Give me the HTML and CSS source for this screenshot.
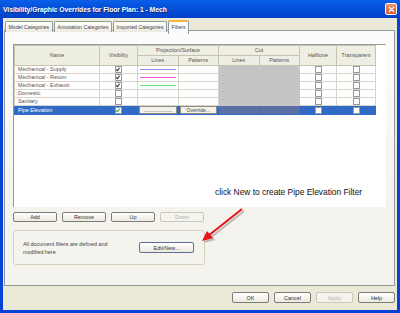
FILE: index.html
```html
<!DOCTYPE html>
<html lang="en">
<head>
<meta charset="UTF-8">
<title>Visibility/Graphic Overrides</title>
<link rel="stylesheet" href="styles.css">
</head>
<body>
<div class="window">
  <div class="titlebar">
    <span class="title">Visibility/Graphic Overrides for Floor Plan: 1 - Mech</span>
    <span class="close">
      <svg width="7" height="7" viewBox="0 0 8 8"><path d="M1 1L7 7M7 1L1 7" stroke="#fff" stroke-width="1.6"/></svg>
    </span>
  </div>
  <div class="tabs">
    <div class="tab">Model Categories</div>
    <div class="tab">Annotation Categories</div>
    <div class="tab">Imported Categories</div>
    <div class="tab active">Filters</div>
  </div>
  <div class="panel">
    <div class="listbox">
      <table class="grid">
        <thead>
          <tr>
            <th rowspan="2" class="c-name">Name</th>
            <th rowspan="2" class="c-vis">Visibility</th>
            <th colspan="2">Projection/Surface</th>
            <th colspan="2">Cut</th>
            <th rowspan="2" class="c-half">Halftone</th>
            <th rowspan="2" class="c-trans">Transparent</th>
          </tr>
          <tr class="sub">
            <th class="c-pl">Lines</th>
            <th class="c-pp">Patterns</th>
            <th class="c-cl">Lines</th>
            <th class="c-cp">Patterns</th>
          </tr>
        </thead>
        <tbody>
          <tr>
            <td class="name">Mechanical - Supply</td>
            <td><span class="chk on"></span></td>
            <td><span class="line supply"></span></td>
            <td></td>
            <td class="cut"></td><td class="cut"></td>
            <td><span class="chk"></span></td>
            <td><span class="chk"></span></td>
          </tr>
          <tr>
            <td class="name">Mechanical - Return</td>
            <td><span class="chk on"></span></td>
            <td><span class="line return"></span></td>
            <td></td>
            <td class="cut"></td><td class="cut"></td>
            <td><span class="chk"></span></td>
            <td><span class="chk"></span></td>
          </tr>
          <tr>
            <td class="name">Mechanical - Exhaust</td>
            <td><span class="chk on"></span></td>
            <td><span class="line exhaust"></span></td>
            <td></td>
            <td class="cut"></td><td class="cut"></td>
            <td><span class="chk"></span></td>
            <td><span class="chk"></span></td>
          </tr>
          <tr>
            <td class="name">Domestic</td>
            <td><span class="chk"></span></td>
            <td></td>
            <td></td>
            <td class="cut"></td><td class="cut"></td>
            <td><span class="chk"></span></td>
            <td><span class="chk"></span></td>
          </tr>
          <tr>
            <td class="name">Sanitary</td>
            <td><span class="chk"></span></td>
            <td></td>
            <td></td>
            <td class="cut"></td><td class="cut"></td>
            <td><span class="chk"></span></td>
            <td><span class="chk"></span></td>
          </tr>
          <tr class="selected">
            <td class="name">Pipe Elevation</td>
            <td><span class="chk on green"></span></td>
            <td><span class="cellbtn dots">..........................</span></td>
            <td><span class="cellbtn">Override...</span></td>
            <td class="cut"></td><td class="cut"></td>
            <td><span class="chk"></span></td>
            <td><span class="chk"></span></td>
          </tr>
        </tbody>
      </table>
      <div class="note">click New to create Pipe Elevation Filter</div>
    </div>
    <div class="btnrow">
      <button class="btn">Add</button>
      <button class="btn">Remove</button>
      <button class="btn">Up</button>
      <button class="btn" disabled>Down</button>
    </div>
    <div class="groupbox">
      <p class="groupText">All document filters are defined and modified here</p>
      <button class="btn edit">Edit/New...</button>
    </div>
  </div>
  <div class="footer">
    <button class="btn small">OK</button>
    <button class="btn small">Cancel</button>
    <button class="btn small" disabled>Apply</button>
    <button class="btn small">Help</button>
  </div>
  <svg class="arrow" width="60" height="50" viewBox="0 0 60 50">
    <g transform="translate(2,2)" opacity="0.35">
      <path d="M44 3L10 30" stroke="#555" stroke-width="2.2" fill="none"/>
      <path d="M4 35L9 25L15 32Z" fill="#555"/>
    </g>
    <path d="M44 3L10 30" stroke="#e8141a" stroke-width="2" fill="none"/>
    <path d="M4 35L9 25L15 32Z" fill="#e8141a"/>
  </svg>
</div>
</body>
</html>
```
FILE: styles.css
```css
body {
    margin: 0;
    font-family: "Liberation Sans", Arial, sans-serif;
    background: #ece9d8;
}
.window {
    position: relative;
    width: 400px;
    height: 313px;
    box-sizing: border-box;
    background: #ece9d8;
    border-left: 3px solid #0842d6;
    border-right: 3px solid #0842d6;
    border-bottom: 3px solid #0842d6;
    display: flex;
    flex-direction: column;
}
.titlebar {
    height: 18px;
    margin: 0 -3px;
    padding: 0 3px 0 3px;
    background: linear-gradient(#0a5fe8, #0450da 40%, #0340c8);
    display: flex;
    align-items: center;
    justify-content: space-between;
}
.title {
    color: #fff;
    font-weight: bold;
    font-size: 6.8px;
    letter-spacing: -0.05px;
    text-shadow: 1px 1px 0 #0a2a80;
}
.close {
    width: 12px;
    height: 12px;
    box-sizing: border-box;
    border: 1px solid #fff;
    border-radius: 2px;
    background: linear-gradient(#ec9474, #d4532b);
    display: flex;
    align-items: center;
    justify-content: center;
}
.tabs {
    display: flex;
    gap: 1px;
    padding: 2px 0 0 2px;
    height: 11px;
    margin-bottom: -1px;
}
.tab {
    font-size: 5.2px;
    color: #444;
    padding: 0 2.5px;
    height: 10px;
    margin-top: 1px;
    line-height: 10px;
    border: 1px solid #919b9c;
    border-bottom: none;
    border-radius: 2px 2px 0 0;
    background: linear-gradient(#fff, #eceae2);
    position: relative;
}
.tab.active {
    margin-top: 0;
    height: 12px;
    background: #fcfcfe;
    border-top: 2px solid #f7b33d;
    z-index: 1;
}
.panel {
    margin: 0 0 0 1px;
    width: 391px;
    height: 256px;
    box-sizing: border-box;
    border: 1px solid #919b9c;
    background: linear-gradient(#fcfcfe, #f4f3ee 60%);
    padding: 13px 0 0 8px;
    display: flex;
    flex-direction: column;
}
.listbox {
    width: 373px;
    height: 163px;
    box-sizing: border-box;
    background: #fff;
    border-left: 1px solid #9c9a8f;
    border-top: 1px solid #9c9a8f;
    display: flex;
    flex-direction: column;
}
.grid {
    border-collapse: collapse;
    width: 362px;
    table-layout: fixed;
    font-size: 5.4px;
}
.grid th {
    background: #efeee3;
    color: #555;
    font-weight: normal;
    border: 1px solid #c6c3b2;
    height: 9px;
    padding: 0;
    line-height: 9px;
}
.grid th[rowspan] {
    vertical-align: middle;
}
.c-name { width: 84px; }
.c-vis { width: 37px; }
.c-pl { width: 41px; }
.c-pp { width: 42px; }
.c-cl { width: 41px; }
.c-cp { width: 43px; }
.c-half { width: 36px; }
.c-trans { width: 38px; }
.grid td {
    border: 1px solid #d6d4cb;
    height: 7px;
    padding: 0;
    text-align: center;
    line-height: 7px;
    background: #fff;
}
.grid td.name {
    text-align: left;
    padding-left: 3px;
    color: #555;
    white-space: nowrap;
}
.grid td.cut {
    background: #c4c4c4;
    border-color: #c8c8c8;
}
.chk {
    display: inline-block;
    width: 5px;
    height: 5px;
    border: 1px solid #9a9a9a;
    background: #fff;
    vertical-align: middle;
    position: relative;
}
.chk.on::after {
    content: "";
    position: absolute;
    left: 1px;
    top: 0;
    width: 1px;
    height: 3px;
    border-right: 1.2px solid #222;
    border-bottom: 1.2px solid #222;
    transform: rotate(40deg);
}
.chk.green::after {
    border-color: #2b9a2b;
}
.line {
    display: block;
    margin: 0 2px;
    height: 1px;
}
.supply { background: #8486f0; }
.return { background: #f05ce8; }
.exhaust { background: #70e070; }
.grid tr.selected td {
    background: #316ac5;
    border-color: #316ac5;
    height: 8px;
}
.grid tr.selected td.name {
    color: #fff;
}
.grid tr.selected td.cut {
    background: #5b6fa6;
}
.cellbtn {
    display: block;
    margin: 0 1px;
    height: 6px;
    line-height: 6px;
    background: #f3f2ea;
    border: 1px solid #8f8d80;
    border-radius: 1px;
    font-size: 5px;
    color: #444;
    overflow: hidden;
}
.cellbtn.dots {
    letter-spacing: -0.3px;
}
.note {
    margin-top: auto;
    padding: 0 0 10px 201px;
    font-size: 8.4px;
    color: #111;
}
.btnrow {
    display: flex;
    gap: 5px;
    margin-top: 5px;
}
.btn {
    width: 44px;
    height: 10px;
    padding: 0;
    font-family: "Liberation Sans", Arial, sans-serif;
    font-size: 5.4px;
    color: #333;
    background: linear-gradient(#fff, #ece9e0);
    border: 1px solid #7d7d75;
    border-radius: 2px;
    line-height: 8px;
}
.btn:disabled {
    color: #b5b2a5;
    border-color: #cac8bb;
    background: #f4f3ee;
}
.groupbox {
    width: 192px;
    height: 35px;
    margin-top: 8px;
    box-sizing: border-box;
    border: 1px solid #d5d2c0;
    border-radius: 3px;
    display: flex;
    align-items: center;
    padding: 0 9px 0 9px;
    gap: 12px;
}
.groupText {
    margin: 0;
    width: 104px;
    font-size: 5.4px;
    line-height: 8px;
    color: #444;
}
.btn.edit {
    width: 55px;
    height: 11px;
    border-color: #5c6f9e;
}
.footer {
    display: flex;
    justify-content: flex-end;
    gap: 5px;
    padding: 6px 2px 0 0;
}
.btn.small {
    width: 37px;
    height: 11px;
}
.arrow {
    position: absolute;
    left: 195px;
    top: 206px;
}
```
